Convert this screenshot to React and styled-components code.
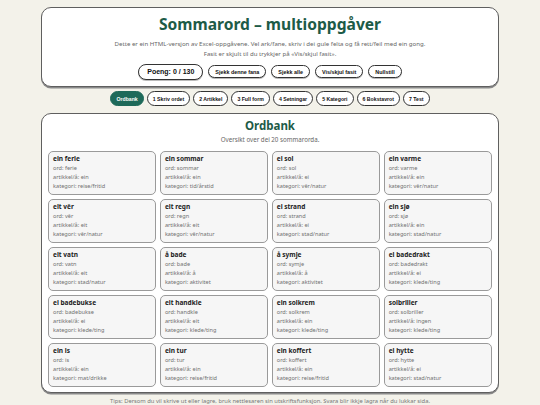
import styled, { createGlobalStyle } from "styled-components";

const words = [
  { head: "ein ferie", ord: "ferie", art: "ein", kat: "reise/fritid" },
  { head: "ein sommar", ord: "sommar", art: "ein", kat: "tid/årstid" },
  { head: "ei sol", ord: "sol", art: "ei", kat: "vêr/natur" },
  { head: "ein varme", ord: "varme", art: "ein", kat: "vêr/natur" },
  { head: "eit vêr", ord: "vêr", art: "eit", kat: "vêr/natur" },
  { head: "eit regn", ord: "regn", art: "eit", kat: "vêr/natur" },
  { head: "ei strand", ord: "strand", art: "ei", kat: "stad/natur" },
  { head: "ein sjø", ord: "sjø", art: "ein", kat: "stad/natur" },
  { head: "eit vatn", ord: "vatn", art: "eit", kat: "stad/natur" },
  { head: "å bade", ord: "bade", art: "å", kat: "aktivitet" },
  { head: "å symje", ord: "symje", art: "å", kat: "aktivitet" },
  { head: "ei badedrakt", ord: "badedrakt", art: "ei", kat: "klede/ting" },
  { head: "ei badebukse", ord: "badebukse", art: "ei", kat: "klede/ting" },
  { head: "eit handkle", ord: "handkle", art: "eit", kat: "klede/ting" },
  { head: "ein solkrem", ord: "solkrem", art: "ein", kat: "klede/ting" },
  { head: "solbriller", ord: "solbriller", art: "ingen", kat: "klede/ting" },
  { head: "ein is", ord: "is", art: "ein", kat: "mat/drikke" },
  { head: "ein tur", ord: "tur", art: "ein", kat: "reise/fritid" },
  { head: "ein koffert", ord: "koffert", art: "ein", kat: "reise/fritid" },
  { head: "ei hytte", ord: "hytte", art: "ei", kat: "stad/natur" },
];

const tabs = [
  "Ordbank",
  "1 Skriv ordet",
  "2 Artikkel",
  "3 Full form",
  "4 Setningar",
  "5 Kategori",
  "6 Bokstavrot",
  "7 Test",
];

const GlobalStyle = createGlobalStyle`
  html, body {
    margin: 0;
    background: #f3f2ea;
  }
  body {
    padding: 7px 0 0;
    font-family: "Noto Sans", "DejaVu Sans", sans-serif;
    color: #222;
  }
`;

const Page = styled.div`
  width: 458px;
  margin: 0 auto;
`;

const Panel = styled.section`
  background: #fff;
  border: 1.5px solid #5f5f5f;
  border-radius: 10px;
  box-shadow: 0 1.5px 0 #8a8a8a;
  padding: ${({ $pad }) => $pad};
  text-align: center;
`;

const Title = styled.h1`
  margin: 0;
  font-size: 15.6px;
  line-height: 20px;
  font-weight: 700;
  color: #1d5b47;
`;

const Lead = styled.p`
  margin: 4.5px 0 0;
  font-size: 6.1px;
  line-height: 10px;
  color: #666;
`;

const Actions = styled.div`
  display: flex;
  justify-content: center;
  align-items: center;
  gap: 5px;
  margin-top: 5px;
`;

const Pill = styled.button`
  font-family: "Liberation Sans", Arial, sans-serif;
  font-weight: 700;
  font-size: ${({ $big }) => ($big ? "7px" : "5.4px")};
  height: ${({ $big }) => ($big ? "16px" : "13px")};
  padding: 0 ${({ $big }) => ($big ? "8px" : "6px")};
  border: 1.2px solid #333;
  border-radius: 999px;
  background: #fff;
  color: #111;
  box-shadow: 0 1px 0 #bbb;
`;

const Tabs = styled.nav`
  display: flex;
  justify-content: center;
  gap: 3px;
  margin: 4px 0 7px;
`;

const Tab = styled.button`
  font-family: "Liberation Sans", Arial, sans-serif;
  font-weight: 700;
  font-size: 5.2px;
  height: 15px;
  padding: 0 5px;
  border-radius: 999px;
  border: 1.2px solid ${({ $active }) => ($active ? "#1e6a5a" : "#333")};
  background: ${({ $active }) => ($active ? "#1e6a5a" : "#fff")};
  color: ${({ $active }) => ($active ? "#fff" : "#111")};
`;

const SectionTitle = styled.h2`
  margin: 0;
  font-size: 11.5px;
  line-height: 15px;
  font-weight: 700;
  color: #1d5b47;
`;

const SectionNote = styled.p`
  margin: 2px 0 0;
  font-size: 6.2px;
  line-height: 9px;
  color: #666;
`;

const Grid = styled.div`
  display: grid;
  grid-template-columns: repeat(4, 1fr);
  column-gap: 3.5px;
  row-gap: 4px;
  margin-top: 6.5px;
  text-align: left;
`;

const Card = styled.div`
  height: 44px;
  box-sizing: border-box;
  padding: 2px 4px;
  background: #f6f6f6;
  border: 1px solid #9a9a9a;
  border-radius: 5px;
`;

const CardHead = styled.div`
  font-size: 6.5px;
  line-height: 10px;
  font-weight: 700;
  color: #222;
`;

const CardLine = styled.div`
  font-size: 5.6px;
  line-height: 9.3px;
  color: #707070;
`;

const Footer = styled.p`
  margin: 4px 0 0;
  font-size: 5.8px;
  line-height: 9px;
  color: #777;
  text-align: center;
`;

export default function App() {
  return (
    <Page>
      <GlobalStyle />
      <Panel $pad="6px 10px 6.5px">
        <Title>Sommarord – multioppgåver</Title>
        <Lead>
          Dette er ein HTML-versjon av Excel-oppgåvene. Vel ark/fane, skriv i
          dei gule felta og få rett/feil med ein gong.
          <br />
          Fasit er skjult til du trykkjer på «Vis/skjul fasit».
        </Lead>
        <Actions>
          <Pill $big>Poeng: 0 / 130</Pill>
          <Pill>Sjekk denne fana</Pill>
          <Pill>Sjekk alle</Pill>
          <Pill>Vis/skjul fasit</Pill>
          <Pill>Nullstill</Pill>
        </Actions>
      </Panel>

      <Tabs>
        {tabs.map((t, i) => (
          <Tab key={t} $active={i === 0}>
            {t}
          </Tab>
        ))}
      </Tabs>

      <Panel $pad="4px 6px 5px">
        <SectionTitle>Ordbank</SectionTitle>
        <SectionNote>Oversikt over dei 20 sommarorda.</SectionNote>
        <Grid>
          {words.map((w) => (
            <Card key={w.head}>
              <CardHead>{w.head}</CardHead>
              <CardLine>ord: {w.ord}</CardLine>
              <CardLine>artikkel/å: {w.art}</CardLine>
              <CardLine>kategori: {w.kat}</CardLine>
            </Card>
          ))}
        </Grid>
      </Panel>

      <Footer>
        Tips: Dersom du vil skrive ut eller lagre, bruk nettlesaren sin
        utskriftsfunksjon. Svara blir ikkje lagra når du lukkar sida.
      </Footer>
    </Page>
  );
}
